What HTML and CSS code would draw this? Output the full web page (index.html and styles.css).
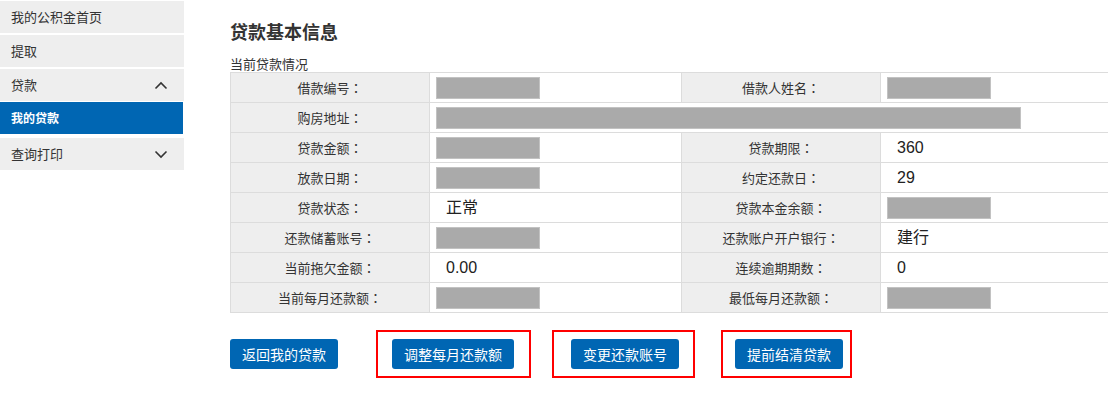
FILE: index.html
```html
<!DOCTYPE html>
<html lang="zh-CN">
<head>
<meta charset="utf-8">
<title>我的贷款</title>
<link rel="stylesheet" href="styles.css">
</head>
<body>
<div class="page">
  <nav class="sidebar">
    <div class="nav-item">我的公积金首页</div>
    <div class="nav-item">提取</div>
    <div class="nav-item nav-group">
      <span>贷款</span>
      <svg class="chev" width="14" height="9" viewBox="0 0 14 9"><path d="M1.5 7.5 L7 2 L12.5 7.5" fill="none" stroke="#333" stroke-width="1.6"/></svg>
    </div>
    <div class="nav-sub">我的贷款</div>
    <div class="nav-item nav-group nav-last">
      <span>查询打印</span>
      <svg class="chev" width="14" height="9" viewBox="0 0 14 9"><path d="M1.5 1.5 L7 7 L12.5 1.5" fill="none" stroke="#333" stroke-width="1.6"/></svg>
    </div>
  </nav>
  <main class="main">
    <h1 class="title">贷款基本信息</h1>
    <div class="subtitle">当前贷款情况</div>
    <table class="info">
      <colgroup>
        <col class="c-label"><col class="c-val"><col class="c-label2"><col class="c-val2">
      </colgroup>
      <tr>
        <th>借款编号<span class="colon" lang="zh-TW">：</span></th><td><span class="mask"></span></td>
        <th>借款人姓名<span class="colon" lang="zh-TW">：</span></th><td><span class="mask"></span></td>
      </tr>
      <tr>
        <th>购房地址<span class="colon" lang="zh-TW">：</span></th><td colspan="3"><span class="mask mask-wide"></span></td>
      </tr>
      <tr>
        <th>贷款金额<span class="colon" lang="zh-TW">：</span></th><td><span class="mask"></span></td>
        <th>贷款期限<span class="colon" lang="zh-TW">：</span></th><td><span class="val">360</span></td>
      </tr>
      <tr>
        <th>放款日期<span class="colon" lang="zh-TW">：</span></th><td><span class="mask"></span></td>
        <th>约定还款日<span class="colon" lang="zh-TW">：</span></th><td><span class="val">29</span></td>
      </tr>
      <tr>
        <th>贷款状态<span class="colon" lang="zh-TW">：</span></th><td><span class="val">正常</span></td>
        <th>贷款本金余额<span class="colon" lang="zh-TW">：</span></th><td><span class="mask"></span></td>
      </tr>
      <tr>
        <th>还款储蓄账号<span class="colon" lang="zh-TW">：</span></th><td><span class="mask"></span></td>
        <th>还款账户开户银行<span class="colon" lang="zh-TW">：</span></th><td><span class="val">建行</span></td>
      </tr>
      <tr>
        <th>当前拖欠金额<span class="colon" lang="zh-TW">：</span></th><td><span class="val">0.00</span></td>
        <th>连续逾期期数<span class="colon" lang="zh-TW">：</span></th><td><span class="val">0</span></td>
      </tr>
      <tr>
        <th>当前每月还款额<span class="colon" lang="zh-TW">：</span></th><td><span class="mask"></span></td>
        <th>最低每月还款额<span class="colon" lang="zh-TW">：</span></th><td><span class="mask"></span></td>
      </tr>
    </table>
    <div class="actions">
      <button class="btn">返回我的贷款</button>
      <div class="mark mark-1"><button class="btn">调整每月还款额</button></div>
      <div class="mark mark-2"><button class="btn">变更还款账号</button></div>
      <div class="mark mark-3"><button class="btn">提前结清贷款</button></div>
    </div>
  </main>
</div>
</body>
</html>
```

FILE: styles.css
```css
html, body {
  margin: 0;
  padding: 0;
  overflow: hidden;
  background: #fff;
}
body {
  font-family: "Noto Sans CJK SC", "Liberation Sans", sans-serif;
  color: #333;
  font-size: 13px;
}
.page {
  display: flex;
  align-items: flex-start;
  width: 1200px;
}
.sidebar {
  width: 184px;
  flex: none;
  padding-top: 1px;
  display: flex;
  flex-direction: column;
}
.nav-item {
  height: 32px;
  line-height: 32px;
  background: #eeeeee;
  padding: 0 11px;
  margin-bottom: 2px;
  font-size: 13px;
  color: #333;
}
.nav-group {
  display: flex;
  justify-content: space-between;
  align-items: center;
  padding-right: 16px;
  margin-bottom: 1px;
}
.nav-last {
  margin-bottom: 0;
}
.chev {
  display: block;
}
.nav-sub {
  height: 32px;
  line-height: 32px;
  width: 172px;
  background: #0066b3;
  color: #fff;
  font-weight: bold;
  padding-left: 11px;
  font-size: 12px;
  margin-bottom: 4px;
}
.main {
  margin-left: 46px;
  flex: none;
  width: 900px;
}
.title {
  margin: 0;
  padding-top: 19px;
  font-size: 18px;
  line-height: 24px;
  font-weight: bold;
  color: #333;
}
.subtitle {
  margin-top: 12px;
  font-size: 13px;
  line-height: 17px;
  color: #333;
}
.info {
  border-collapse: collapse;
  table-layout: fixed;
  width: 900px;
  margin-top: 0;
}
.c-label { width: 199px; }
.c-val { width: 252px; }
.c-label2 { width: 199px; }
.c-val2 { width: 250px; }
.info th, .info td {
  border: 1px solid #dcdcdc;
  height: 30px;
  padding: 0;
  box-sizing: border-box;
}
.info th {
  background: #eeeeee;
  font-weight: normal;
  text-align: center;
  font-size: 13px;
  color: #333;
}
.colon {
  display: inline-block;
  width: 1em;
  text-align: center;
  text-spacing-trim: space-all;
  font-family: "Noto Sans CJK TC", "Noto Sans CJK SC", sans-serif;
}
.info td {
  padding-left: 6px;
  text-align: left;
  vertical-align: middle;
}
.mask {
  display: block;
  width: 102px;
  height: 20px;
  background: #aaaaaa;
  border: 1px solid #c2c2c2;
}
.mask-wide {
  width: 583px;
}
.val {
  display: block;
  padding-left: 10px;
  font-size: 16px;
  line-height: 20px;
  color: #222;
  font-family: "Liberation Sans", "Noto Sans CJK SC", sans-serif;
}
.actions {
  display: flex;
  align-items: center;
  margin-top: 17px;
}
.btn {
  height: 30px;
  padding: 0 12px;
  border: none;
  border-radius: 3px;
  background: #0066b3;
  color: #fff;
  font-family: "Noto Sans CJK SC", "Liberation Sans", sans-serif;
  font-size: 14px;
  line-height: 30px;
  cursor: pointer;
}
.mark {
  border: 2px solid #ff0000;
  padding-top: 7px;
  padding-bottom: 7px;
  display: flex;
}
.mark-1 {
  margin-left: 38px;
  padding-left: 14px;
  padding-right: 15px;
}
.mark-2 {
  margin-left: 21px;
  padding-left: 17px;
  padding-right: 14px;
}
.mark-3 {
  margin-left: 26px;
  padding-left: 12px;
  padding-right: 7px;
}
```
